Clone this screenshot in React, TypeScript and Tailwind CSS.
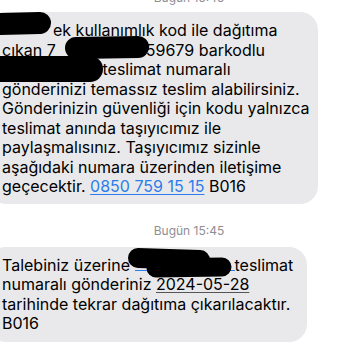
import React from "react";

const Stamp = ({ className = "" }: { className?: string }) => (
  <div className={`flex h-[14px] justify-center pl-[28px] text-[12px] leading-[14px] text-[#8e8e93] ${className}`}>
    Bugün 15:45
  </div>
);

const Gap = ({ w }: { w: string }) => <span className={`inline-block h-[14px] ${w}`} />;

export default function App() {
  return (
    <div className="relative h-[350px] w-[350px] overflow-hidden bg-white font-['Inter','Liberation_Sans',sans-serif] text-black">
      <Stamp className="-mt-[9px]" />

      {/* first message */}
      <div className="mt-[7px] -ml-[12px] w-[330px] rounded-[18px] bg-[#e9e9eb] pt-[9px] pb-[7px] pl-[14px] text-[16px] leading-[19.5px] whitespace-nowrap">
        <div>
          <Gap w="w-[51px]" />ek kullanımlık kod ile dağıtıma
        </div>
        <div>
          çıkan 7<Gap w="w-[90px]" />59679 barkodlu
        </div>
        <div>
          <Gap w="w-[96px]" /> teslimat numaralı
        </div>
        <div>gönderinizi temassız teslim alabilirsiniz.</div>
        <div>Gönderinizin güvenliği için kodu yalnızca</div>
        <div>teslimat anında taşıyıcımız ile</div>
        <div>paylaşmalısınız. Taşıyıcımız sizinle</div>
        <div>aşağıdaki numara üzerinden iletişime</div>
        <div>
          geçecektir. <span className="text-[#2b7de9] underline decoration-[1px] underline-offset-2">0850 759 15 15</span> B016
        </div>
      </div>

      <Stamp className="mt-[20px]" />

      {/* second message */}
      <div className="mt-[9px] -ml-[12px] w-[319px] rounded-[18px] bg-[#e9e9eb] pt-[9px] pb-[8px] pl-[14px] text-[16px] leading-[19.5px] whitespace-nowrap">
        <div>
          Talebiniz üzerine <span className="inline-block h-[14px] w-[100px] border-b-[1.5px] border-[#2b7de9]" />teslimat
        </div>
        <div>
          numaralı gönderiniz <span className="underline decoration-[#555] decoration-[1px] underline-offset-2">2024-05-28</span>
        </div>
        <div>tarihinde tekrar dağıtıma çıkarılacaktır.</div>
        <div>B016</div>
      </div>

      {/* redaction scribbles */}
      <svg className="pointer-events-none absolute top-0 left-0" width="350" height="350" viewBox="0 0 350 350">
        <g stroke="#000" strokeLinecap="round" fill="none">
          <path d="M -4 24 L 40 23" strokeWidth="22" />
          <path d="M 76 48 L 138 47" strokeWidth="22" />
          <path d="M -5 69 L 90 69" strokeWidth="26" />
          <path d="M 138 258 L 200 260" strokeWidth="20" />
          <path d="M 156 268 L 222 267" strokeWidth="19" />
        </g>
      </svg>
    </div>
  );
}
